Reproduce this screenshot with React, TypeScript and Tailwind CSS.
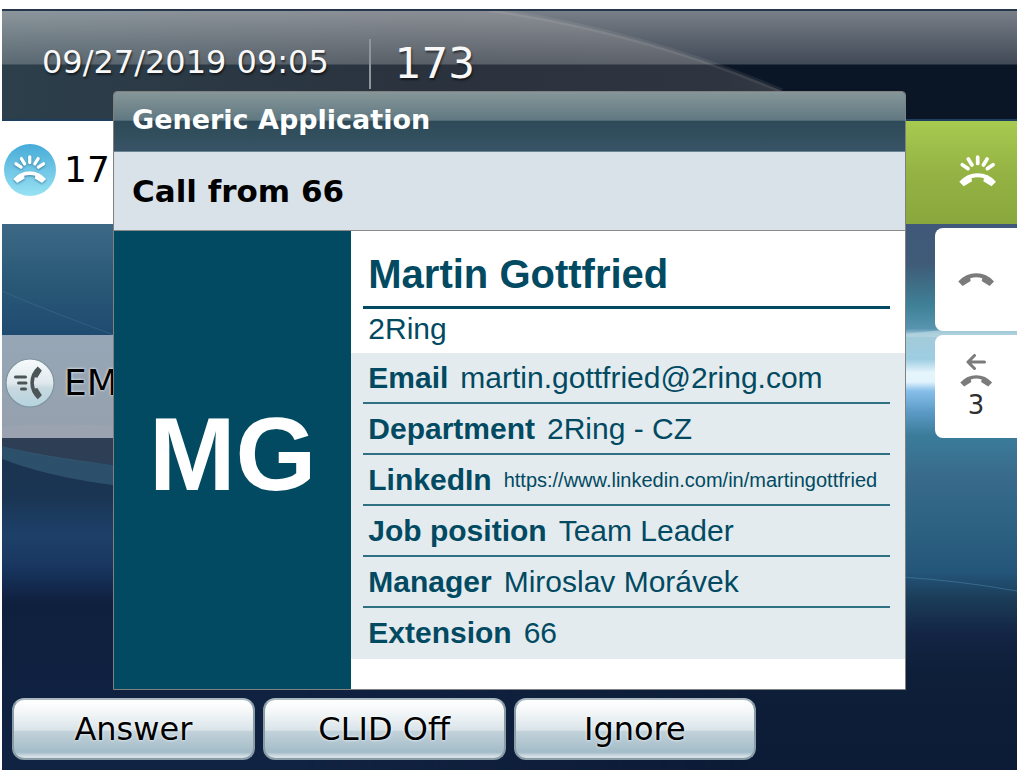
import type { ReactNode } from "react";

const DETAILS = [
  { label: "Email", value: "martin.gottfried@2ring.com" },
  { label: "Department", value: "2Ring - CZ" },
  {
    label: "LinkedIn",
    value: "https://www.linkedin.com/in/martingottfried",
    small: true,
  },
  { label: "Job position", value: "Team Leader" },
  { label: "Manager", value: "Miroslav Morávek" },
  { label: "Extension", value: "66" },
];

const SOFTKEYS = ["Answer", "CLID Off", "Ignore"];

const HANDSET =
  "M0.3 26.7 Q8 18.3 18.7 18.3 Q29.5 18.3 37 26.7 L32.5 31.3 L24.3 26.2 L25 23.3 Q18.7 21.3 12.5 23.3 L13 26.2 L4.7 31.3 Z";

function Ringing({ className }: { className: string }) {
  return (
    <svg viewBox="0 0 38 32" className={className} fill="currentColor" aria-hidden>
      <path
        d="M18.7 2V8.5M9.3 4L13 10M28.1 4L24.4 10M3.3 9.8L9 13.6M34.1 9.8L28.4 13.6"
        stroke="currentColor"
        strokeWidth="3.7"
        strokeLinecap="round"
      />
      <path d={HANDSET} />
    </svg>
  );
}

function Handset({ className }: { className: string }) {
  return (
    <svg viewBox="0 17 38 15" className={className} fill="currentColor" aria-hidden>
      <path d={HANDSET} />
    </svg>
  );
}

function SpeedDialIcon() {
  return (
    <svg viewBox="0 0 52 52" className="h-[52px] w-[52px] shrink-0" aria-hidden>
      <defs>
        <linearGradient id="dial" x1="0" y1="0" x2="0" y2="1">
          <stop offset="0" stopColor="#f8fbfc" />
          <stop offset="0.5" stopColor="#dfe9ed" />
          <stop offset="0.6" stopColor="#c9d9e0" />
          <stop offset="1" stopColor="#b4d3de" />
        </linearGradient>
      </defs>
      <circle cx="26" cy="26" r="24" fill="url(#dial)" stroke="#7f959f" strokeWidth="1.2" />
      <path
        d="M11.5 20H21.5M14.5 26H22M17.5 32H21.5"
        stroke="#4b5457"
        strokeWidth="3"
        strokeLinecap="round"
      />
      <path
        d={HANDSET}
        fill="#4b5457"
        transform="translate(10 42.5) rotate(-90) scale(0.89)"
      />
    </svg>
  );
}

/* Blue phone wallpaper, with the light arc that runs behind the status bar */
function Wallpaper() {
  return (
    <svg
      viewBox="0 0 1015 761"
      preserveAspectRatio="none"
      className="absolute inset-0 h-full w-full"
      aria-hidden
    >
      <defs>
        <linearGradient id="west" x1="0" y1="0" x2="0" y2="761" gradientUnits="userSpaceOnUse">
          <stop offset="0.28" stopColor="#3d6986" />
          <stop offset="0.36" stopColor="#295977" />
          <stop offset="0.43" stopColor="#1f4a70" />
          <stop offset="0.56" stopColor="#1b334e" />
          <stop offset="0.64" stopColor="#1a3553" />
          <stop offset="0.69" stopColor="#1d4069" />
          <stop offset="0.73" stopColor="#193761" />
          <stop offset="0.78" stopColor="#0f203f" />
          <stop offset="1" stopColor="#112342" />
        </linearGradient>
        <linearGradient id="east" x1="0" y1="0" x2="0" y2="761" gradientUnits="userSpaceOnUse">
          <stop offset="0.28" stopColor="#40587a" />
          <stop offset="0.335" stopColor="#3f5b77" />
          <stop offset="0.39" stopColor="#3f8197" />
          <stop offset="0.42" stopColor="#5894af" />
          <stop offset="0.428" stopColor="#a4cbd9" />
          <stop offset="0.46" stopColor="#9dcde2" />
          <stop offset="0.478" stopColor="#e6f5fb" />
          <stop offset="0.49" stopColor="#e2f3fc" />
          <stop offset="0.502" stopColor="#86bfe9" />
          <stop offset="0.53" stopColor="#5b9ac5" />
          <stop offset="0.56" stopColor="#3b7c9b" />
          <stop offset="0.61" stopColor="#396c8c" />
          <stop offset="0.69" stopColor="#2b6080" />
          <stop offset="0.74" stopColor="#24557a" />
          <stop offset="0.775" stopColor="#1b3c58" />
          <stop offset="0.82" stopColor="#132544" />
          <stop offset="0.87" stopColor="#0e1f3a" />
          <stop offset="1" stopColor="#0c1b35" />
        </linearGradient>
        <linearGradient id="fade" x1="0" y1="0" x2="1" y2="0">
          <stop offset="0.3" stopColor="#000" />
          <stop offset="0.75" stopColor="#fff" />
        </linearGradient>
        <mask id="fadeEast">
          <rect width="1015" height="761" fill="url(#fade)" />
        </mask>
        <linearGradient id="arc" x1="0" y1="0" x2="1" y2="0">
          <stop offset="0" stopColor="#2c3f4b" />
          <stop offset="0.5" stopColor="#2a323d" />
          <stop offset="0.85" stopColor="#2f3540" />
          <stop offset="1" stopColor="#3a414a" />
        </linearGradient>
      </defs>
      <rect width="1015" height="761" fill="url(#west)" />
      <rect width="1015" height="761" fill="url(#east)" mask="url(#fadeEast)" />
      <path d="M0 418 Q60 412 150 420 V457 Q60 455 0 437Z" fill="#3f4a5c" opacity="0.5" />
      <path d="M0 437 Q50 450 150 460 V480 Q60 473 0 450Z" fill="#3d6782" opacity="0.55" />
      <path d="M0 282 Q40 300 150 340" fill="none" stroke="#4c7f99" opacity="0.35" />
      <path d="M900 568 Q960 572 1015 582" fill="none" stroke="#4681a3" opacity="0.6" />
      <path d="M900 325 L1015 314 V328 H900Z" fill="#b4d4e0" opacity="0.7" />
      <rect width="1015" height="112" fill="#0a1626" />
      <path d="M0 0H485Q640 22 780 82L850 112H0Z" fill="url(#arc)" />
      <path d="M485 0Q640 22 780 82" fill="none" stroke="#8a8c90" strokeWidth="5" opacity="0.15" />
    </svg>
  );
}

function LineKey({ label, className, children }: { label: string; className: string; children: ReactNode }) {
  return (
    <button
      type="button"
      aria-label={label}
      className={`flex h-[103px] flex-col items-center justify-center ${className}`}
    >
      {children}
    </button>
  );
}

function PhoneScreen() {
  return (
    <div className="relative col-start-1 row-start-1 flex flex-col">
      <header className="flex h-28 items-start border-t-2 border-b-2 border-t-[#26364b] border-b-[#1f3f5f] bg-[linear-gradient(to_bottom,rgba(255,255,255,0.45)_0px,rgba(255,255,255,0.22)_53px,transparent_54px)] text-[#f8f8f8] [text-shadow:1px_2px_2px_rgba(0,0,0,0.55)]">
        <time className="mt-7 pl-10 text-[32px] leading-[46px]">09/27/2019 09:05</time>
        <div className="mt-7 ml-10 flex h-[50px] items-center border-l-2 border-[#8f959b] pl-6 text-[42px] leading-[50px]">
          173
        </div>
      </header>

      <main className="flex flex-1 justify-between">
        <div className="flex flex-1 flex-col gap-1">
          <div className="flex h-[103px] items-center gap-2 bg-white pb-1.5 pl-[2px] text-[36px] text-black">
            <span className="flex h-[52px] w-[52px] shrink-0 items-center justify-center rounded-full bg-linear-to-b from-[#45abd8] to-[#98e2f3] text-white">
              <Ringing className="w-[34px] drop-shadow-[0_1px_1px_rgba(20,80,120,0.6)]" />
            </span>
            <span>17</span>
          </div>
          <div className="h-[103px]" />
          <div className="flex h-[103px] items-center gap-2 bg-[#bfc6cd]/75 pb-2 pl-[2px] text-[36px] text-black [text-shadow:0_0_3px_#fff]">
            <SpeedDialIcon />
            <span>EM</span>
          </div>
        </div>
        <div className="flex flex-1 flex-col items-end gap-1">
          <LineKey
            label="Ringing line"
            className="w-full items-end bg-linear-to-b from-[#a7ca50] via-[#95b344] to-[#8aa73d] pr-5 pb-1 text-white"
          >
            <Ringing className="w-[38px]" />
          </LineKey>
          <LineKey label="Phone" className="w-[82px] rounded-l-lg bg-white text-[#7b7b7b]">
            <Handset className="w-[37px]" />
          </LineKey>
          <LineKey label="Missed calls" className="w-[82px] rounded-l-lg bg-white pt-1 text-[#7b7b7b]">
            <svg viewBox="0 0 20 16" className="w-5" fill="none" stroke="currentColor" strokeWidth="3" strokeLinecap="round" strokeLinejoin="round" aria-hidden>
              <path d="M18.5 8H2M8.5 1.5L2 8L8.5 14.5" />
            </svg>
            <Handset className="mt-1 w-[33px]" />
            <span className="text-[26px] leading-9 text-[#2f2f2f]">3</span>
          </LineKey>
        </div>
      </main>

      <footer className="grid grid-cols-4 gap-2 px-2.5 pb-2.5">
        {SOFTKEYS.map((key) => (
          <button
            key={key}
            type="button"
            className="h-[62px] rounded-xl border-2 border-[#8a9da6] border-t-[#a9b7be] bg-[linear-gradient(to_bottom,#ffffff_0%,#f4f7f8_20%,#d9e4e9_52%,#c2d2da_54%,#a3bcc8_90%,#d3dfe4_97%)] text-[32px] leading-10 text-black [text-shadow:0_0_3px_#fff]"
          >
            {key}
          </button>
        ))}
      </footer>
    </div>
  );
}

function CallDialog() {
  return (
    <section
      role="dialog"
      aria-label="Generic Application"
      className="relative col-start-1 row-start-1 mx-[111px] mt-[82px] mb-20 flex flex-col rounded-t border border-[#808080]"
    >
      <h1 className="h-[60px] rounded-t-[3px] border-b border-[#6d8592] bg-[linear-gradient(to_bottom,#869699_0%,#607881_48%,#2e4a58_49%,#33505f_80%,#385367_100%)] pl-[18px] text-[27px] leading-[56px] font-bold text-white">
        Generic Application
      </h1>
      <h2 className="h-[79px] border-b border-[#8b8b8b] bg-[#dae2e9] pl-[18px] text-[31px] leading-[78px] font-bold text-black">
        Call from 66
      </h2>

      <div className="flex font-['Liberation_Sans',Arial,sans-serif] text-[#014a62]">
        <div className="flex w-[30%] items-center justify-center bg-[#014a62] pb-3 text-[104px] leading-none font-bold text-white">
          MG
        </div>
        <div className="min-w-0 flex-1 bg-white pb-[30px]">
          <h3 className="mr-[15px] ml-3 border-b-3 border-current pt-4 pb-1 pl-[5px] text-[40px] leading-[55px] font-bold">
            Martin Gottfried
          </h3>
          <p className="h-11 pl-[17px] text-[30px] leading-10">2Ring</p>
          <dl className="bg-[#e4ebee] pr-[15px] pl-3">
            {DETAILS.map((d) => (
              <div
                key={d.label}
                className="flex h-[51px] items-center gap-3 border-b-2 border-[#2f7082] pl-[5px] whitespace-nowrap last:border-transparent"
              >
                <dt className="text-[30px] leading-10 font-bold">{d.label}</dt>
                <dd className={d.small ? "text-[20px] leading-10" : "text-[30px] leading-10"}>
                  {d.value}
                </dd>
              </div>
            ))}
          </dl>
        </div>
      </div>
    </section>
  );
}

export default function App() {
  return (
    <div className="bg-white pt-[9px] pr-[7px] pb-2 pl-[2px] font-['DejaVu_Sans',sans-serif]">
      <div className="relative grid overflow-hidden bg-[#0e1f3a]">
        <Wallpaper />
        <PhoneScreen />
        <CallDialog />
      </div>
    </div>
  );
}
